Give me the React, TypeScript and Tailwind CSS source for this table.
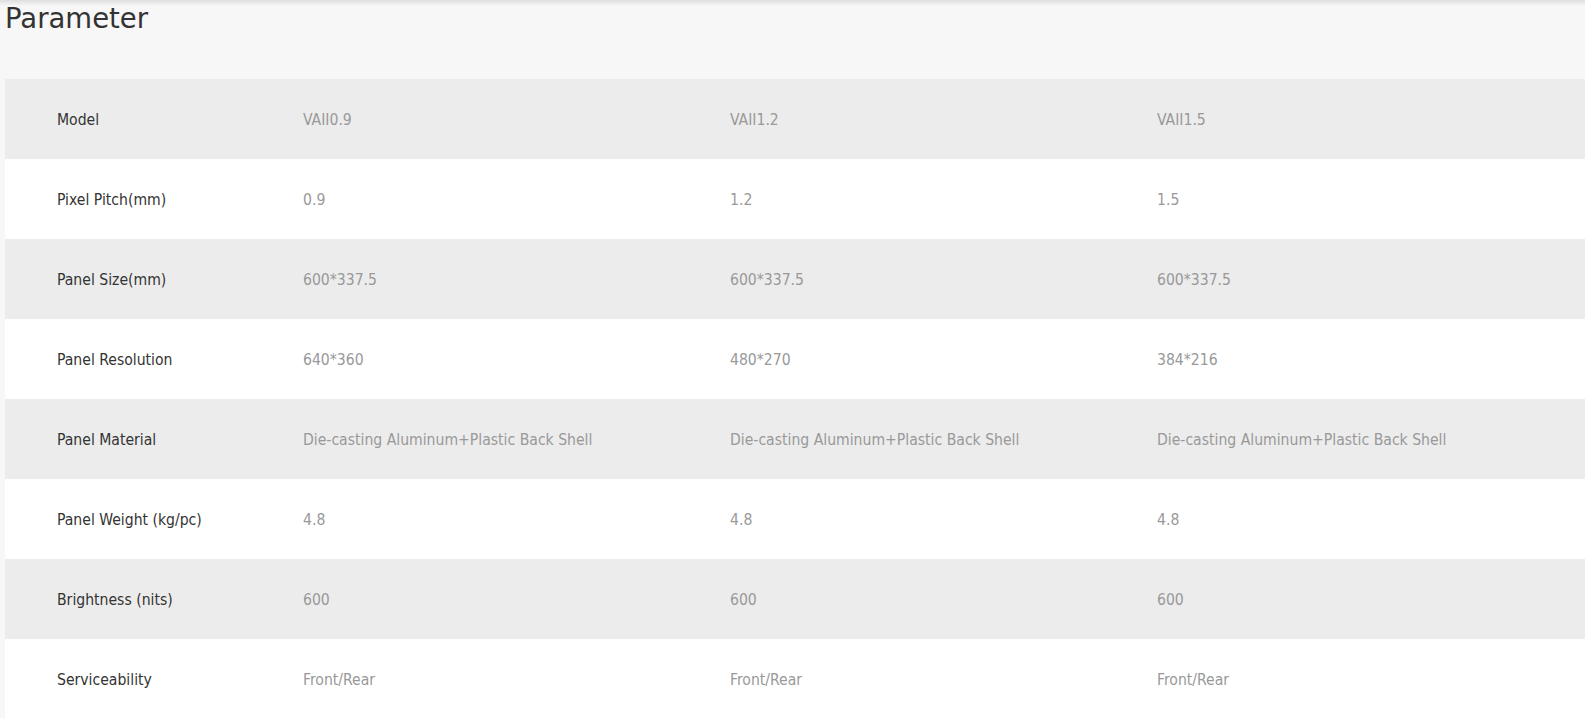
const rows = [
  { label: 'Model', values: ['VAII0.9', 'VAII1.2', 'VAII1.5'] },
  { label: 'Pixel Pitch(mm)', values: ['0.9', '1.2', '1.5'] },
  { label: 'Panel Size(mm)', values: ['600*337.5', '600*337.5', '600*337.5'] },
  { label: 'Panel Resolution', values: ['640*360', '480*270', '384*216'] },
  {
    label: 'Panel Material',
    values: [
      'Die-casting Aluminum+Plastic Back Shell',
      'Die-casting Aluminum+Plastic Back Shell',
      'Die-casting Aluminum+Plastic Back Shell',
    ],
  },
  { label: 'Panel Weight (kg/pc)', values: ['4.8', '4.8', '4.8'] },
  { label: 'Brightness (nits)', values: ['600', '600', '600'] },
  { label: 'Serviceability', values: ['Front/Rear', 'Front/Rear', 'Front/Rear'] },
]

export default function App() {
  return (
    <div className="relative min-h-screen bg-[#f7f7f7] font-['DejaVu_Sans_Condensed','DejaVu_Sans',sans-serif]">
      {/* shadow from the header above */}
      <div className="pointer-events-none absolute inset-x-0 top-0 h-[6px] bg-gradient-to-b from-black/10 to-transparent" />
      <h2 className="pl-[5px] pt-[1px] font-['DejaVu_Sans',sans-serif] text-[27.5px] leading-[34px] text-[#333]">
        Parameter
      </h2>
      <div className="ml-[5px] mt-[44px]">
        {rows.map((row, i) => (
          <div
            key={row.label}
            className={`grid h-20 grid-cols-[298px_427px_427px_1fr] items-center pt-[3px] text-[15.6px] ${i % 2 === 0 ? 'bg-[#ececec]' : 'bg-white'}`}
          >
            <div className="pl-[52px] text-[#333]">{row.label}</div>
            {row.values.map((v, j) => (
              <div key={j} className="text-[#999]">
                {v}
              </div>
            ))}
          </div>
        ))}
      </div>
    </div>
  )
}
